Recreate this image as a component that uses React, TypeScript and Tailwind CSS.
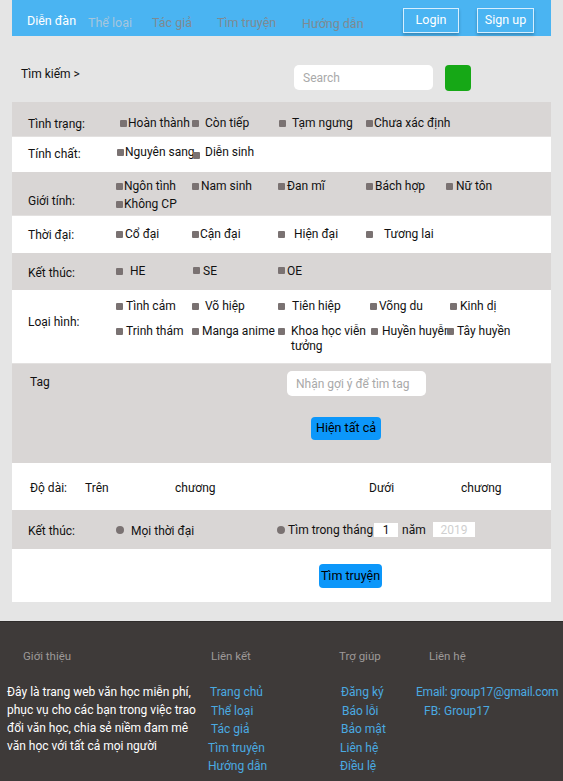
import { ReactNode } from "react";

type Opt = { t: string; c: string; box?: string };

const tinhTrang: Opt[] = [
  { t: "Hoàn thành", c: "ml-[4px] gap-px" },
  { t: "Còn tiếp", c: "gap-[6px]" },
  { t: "Tạm ngưng", c: "ml-px gap-[6px]" },
  { t: "Chưa xác định", c: "gap-px" },
];

const tinhChat: Opt[] = [
  { t: "Nguyên sang", c: "ml-px gap-[1px]" },
  { t: "Diễn sinh", c: "ml-px gap-[5px]", box: "translate-y-[3px]" },
];

const gioiTinh: Opt[] = [
  { t: "Ngôn tình", c: "gap-px" },
  { t: "Nam sinh", c: "gap-[2px]" },
  { t: "Đan mĩ", c: "gap-[2px]" },
  { t: "Bách hợp", c: "gap-[2px]" },
  { t: "Nữ tôn", c: "gap-[3px]" },
  { t: "Không CP", c: "gap-px" },
];

const thoiDai: Opt[] = [
  { t: "Cổ đại", c: "gap-[2px]" },
  { t: "Cận đại", c: "gap-px" },
  { t: "Hiện đại", c: "gap-[9px]" },
  { t: "Tương lai", c: "gap-[11px]" },
];

const ketThuc: Opt[] = [
  { t: "HE", c: "gap-[7px]" },
  { t: "SE", c: "ml-px gap-[3px]", box: "translate-y-[-1px]" },
  { t: "OE", c: "gap-[2px]", box: "translate-y-[-1px]" },
];

const loaiHinh: Opt[] = [
  { t: "Tình cảm", c: "gap-[3px]" },
  { t: "Võ hiệp", c: "gap-[6px]" },
  { t: "Tiên hiệp", c: "gap-[7px]" },
  { t: "Võng du", c: "ml-[4px] gap-[2px]" },
  { t: "Kinh dị", c: "ml-[4px] gap-[3px]" },
  { t: "Trinh thám", c: "gap-[3px]" },
  { t: "Manga anime", c: "gap-[3px]" },
  { t: "Khoa học viễn tưởng", c: "gap-[6px]" },
  { t: "Huyền huyễn", c: "ml-[5px] gap-[4px]" },
  { t: "Tây huyền", c: "ml-px gap-[3px]" },
];

function Option({ o }: { o: Opt }) {
  const wrap = o.t === "Khoa học viễn tưởng";
  return (
    <div className={`flex items-start ${o.c}`}>
      <span
        className={`mt-[4px] size-[7px] shrink-0 rounded-[1px] bg-[#7a7272] ${o.box ?? ""}`}
      />
      <span className={wrap ? "w-[76px]" : "whitespace-nowrap"}>{o.t}</span>
    </div>
  );
}

function OptionGrid({ items, rowGap }: { items: Opt[]; rowGap: string }) {
  return (
    <div
      className={`grid grid-cols-[76px_86px_88px_80px_1fr] ${rowGap} leading-[15px]`}
    >
      {items.map((o) => (
        <Option key={o.t} o={o} />
      ))}
    </div>
  );
}

function Row({ className, children }: { className: string; children: ReactNode }) {
  return <div className={`flex ${className}`}>{children}</div>;
}

function Label({ children, className = "" }: { children: ReactNode; className?: string }) {
  return <div className={`w-[104px] shrink-0 pl-[16px] ${className}`}>{children}</div>;
}

const gray = "bg-[#d9d6d5]";

export default function App() {
  return (
    <div
      className="min-h-[781px] w-[563px] bg-[#e5e5e5] text-[12px] text-[#111]"
      style={{ fontFamily: "Roboto, 'Noto Sans', sans-serif" }}
    >
      {/* header */}
      <div className="mx-[12px] flex h-[36px] items-start bg-[#4ab4f2]">
        <nav className="flex pl-[15px] pt-[12px] text-[12.5px]">
          <a className="w-[61px] text-white">Diễn đàn</a>
          <a className="mt-[2px] w-[64px] text-[#a6c6dc]">Thể loại</a>
          <a className="mt-[2px] w-[65px] text-[#7e8a92]">Tác giả</a>
          <a className="mt-[2px] w-[85px] text-[#7e8a92]">Tìm truyện</a>
          <a className="mt-[3px] text-[#7e8a92]">Hướng dẫn</a>
        </nav>
        <div className="ml-auto flex gap-[18px] pr-[17px] pt-[8px]">
          <button className="h-[25px] w-[56px] border border-[#d6efff] text-[12.5px] text-white shadow-[0_2px_3px_rgba(0,0,0,0.25)]">
            Login
          </button>
          <button className="h-[25px] w-[57px] border border-[#d6efff] text-[12.5px] text-white shadow-[0_2px_3px_rgba(0,0,0,0.25)]">
            Sign up
          </button>
        </div>
      </div>

      {/* search */}
      <div className="flex h-[66px] items-start pl-[21px] pt-[29px]">
        <span className="w-[273px]">Tìm kiếm &gt;</span>
        <input
          className="h-[25px] w-[139px] rounded-[5px] bg-white px-[9px] text-[12px] outline-none placeholder:text-[#a9a9a9]"
          placeholder="Search"
        />
        <button className="ml-[12px] h-[26px] w-[26px] rounded-[4px] bg-[#16a816]" />
      </div>

      {/* filter panel */}
      <div className="mx-[12px] flex flex-col">
        <Row className={`${gray} h-[34px] items-start pt-[14px]`}>
          <Label className="-mt-px">Tình trạng:</Label>
          <OptionGrid items={tinhTrang} rowGap="" />
        </Row>
        <Row className="h-[36px] items-start border-t border-[#e3e1e0] bg-white pt-[8px]">
          <Label>Tính chất:</Label>
          <OptionGrid items={tinhChat} rowGap="" />
        </Row>
        <Row className={`${gray} h-[43px] items-start pt-[7px]`}>
          <Label className="pt-[13px]">Giới tính:</Label>
          <OptionGrid items={gioiTinh} rowGap="gap-y-[3px]" />
        </Row>
        <Row className="h-[38px] items-center border-t border-[#e3e1e0] bg-white">
          <Label>Thời đại:</Label>
          <OptionGrid items={thoiDai} rowGap="" />
        </Row>
        <Row className={`${gray} h-[37px] items-center`}>
          <Label className="pt-[2px]">Kết thúc:</Label>
          <OptionGrid items={ketThuc} rowGap="" />
        </Row>
        <Row className="h-[73px] items-start bg-white pt-[9px]">
          <Label className="pt-[14px]">Loại hình:</Label>
          <OptionGrid items={loaiHinh} rowGap="gap-y-[10px]" />
        </Row>
        <div className={`${gray} flex h-[100px] flex-col border-t border-[#e3e1e0]`}>
          <div className="flex items-start pt-[7px]">
            <span className="ml-[18px] mt-[2px] w-[257px]">Tag</span>
            <input
              className="h-[25px] w-[139px] rounded-[5px] bg-white px-[9px] text-[12px] outline-none placeholder:text-[#a9a9a9]"
              placeholder="Nhận gợi ý để tìm tag"
            />
          </div>
          <button className="ml-[299px] mt-[21px] h-[23px] w-[70px] rounded-[4px] bg-[#0c97fa] text-[12.5px] text-black">
            Hiện tất cả
          </button>
        </div>
        <div className="flex h-[47px] items-center bg-white pt-[3px]">
          <span className="ml-[18px] w-[55px]">Độ dài:</span>
          <span className="w-[90px]">Trên</span>
          <span className="w-[194px]">chương</span>
          <span className="w-[92px]">Dưới</span>
          <span>chương</span>
        </div>
        <div className={`${gray} flex h-[39px] items-center`}>
          <Label className="pt-[3px]">Kết thúc:</Label>
          <span className="size-[8px] rounded-full bg-[#7a7272]" />
          <span className="ml-[7px] mt-[3px] w-[146px]">Mọi thời đại</span>
          <span className="size-[8px] rounded-full bg-[#7a7272]" />
          <span className="ml-[3px] w-[82px] whitespace-nowrap">Tìm trong tháng</span>
          <span className="ml-[4px] flex h-[14px] w-[24px] items-center justify-center bg-white">
            1
          </span>
          <span className="ml-[4px] w-[31px]">năm</span>
          <span className="flex h-[15px] w-[42px] items-center justify-center bg-white text-[#cfcfcf]">
            2019
          </span>
        </div>
        <div className="flex h-[53px] items-start bg-white pt-[15px]">
          <button className="ml-[307px] h-[24px] w-[63px] rounded-[4px] bg-[#0c97fa] text-[12.5px] text-black">
            Tìm truyện
          </button>
        </div>
      </div>

      {/* footer */}
      <footer className="mt-[19px] flex h-[160px] border-t border-[#2f2c2b] bg-[#3e3a39] pt-[26px] text-[12px]">
        <div className="w-[203px] shrink-0">
          <div className="ml-[23px] text-[11.5px] text-[#9d9998]">Giới thiệu</div>
          <div className="mt-[18px] pl-[7px] leading-[18px] text-white">
            <div>Đây là trang web văn học miễn phí,</div>
            <div>phục vụ cho các bạn trong việc trao</div>
            <div>đổi văn học, chia sẻ niềm đam mê</div>
            <div>văn học với tất cả mọi người</div>
          </div>
        </div>
        <div className="w-[130px] shrink-0">
          <div className="ml-[8px] text-[11.5px] text-[#9d9998]">Liên kết</div>
          <div className="mt-[18px] flex flex-col leading-[18.5px] text-[#4aaae2]">
            <a className="ml-[7px]">Trang chủ</a>
            <a className="ml-[8px]">Thể loại</a>
            <a className="ml-[8px]">Tác giả</a>
            <a className="ml-[5px]">Tìm truyện</a>
            <a className="ml-[5px]">Hướng dẫn</a>
          </div>
        </div>
        <div className="w-[83px] shrink-0">
          <div className="ml-[6px] text-[11.5px] text-[#9d9998]">Trợ giúp</div>
          <div className="mt-[18px] flex flex-col leading-[18.5px] text-[#4aaae2]">
            <a className="ml-[8px]">Đăng ký</a>
            <a className="ml-[9px]">Báo lỗi</a>
            <a className="ml-[8px]">Bảo mật</a>
            <a className="ml-[7px]">Liên hệ</a>
            <a className="ml-[7px]">Điều lệ</a>
          </div>
        </div>
        <div className="flex-1">
          <div className="ml-[13px] text-[11.5px] text-[#9d9998]">Liên hệ</div>
          <div className="mt-[18px] flex flex-col leading-[18.5px] text-[#4aaae2]">
            <span className="whitespace-nowrap tracking-[-0.2px]">Email: group17@gmail.com</span>
            <span className="ml-[8px]">FB: Group17</span>
          </div>
        </div>
      </footer>
    </div>
  );
}
